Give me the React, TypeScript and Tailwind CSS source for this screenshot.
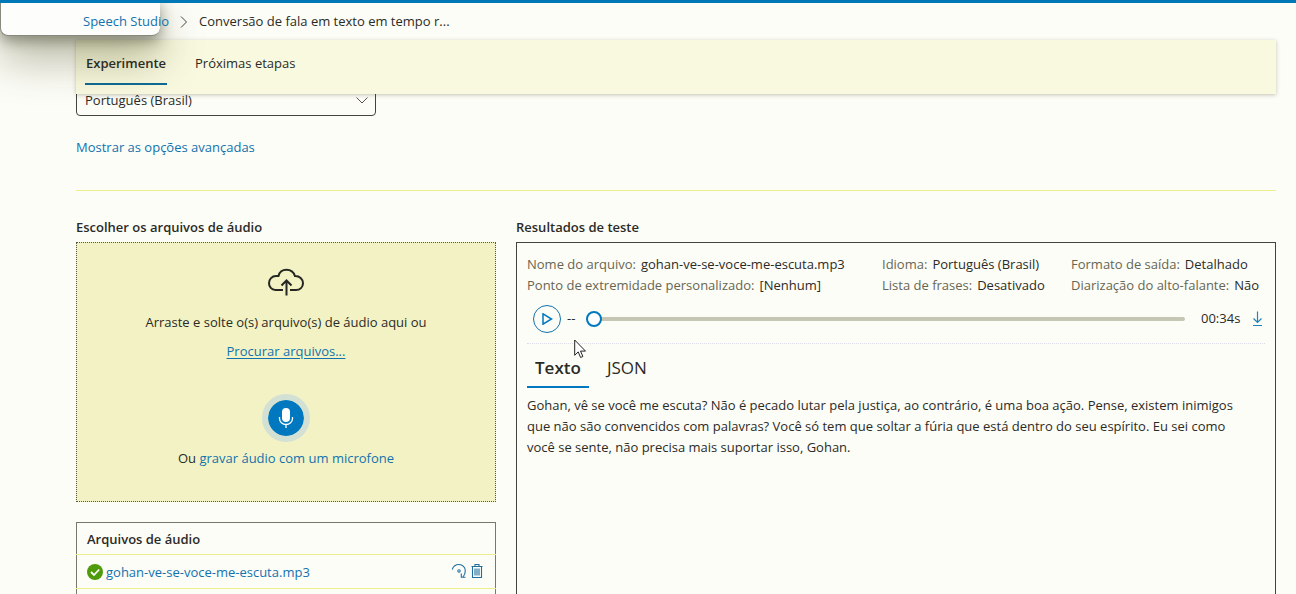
import React, { useState } from "react";

const linkClass = "text-[#1272ad]";

function Info({ label, value }: { label: string; value: string }) {
  return (
    <div className="flex gap-[5px] whitespace-nowrap">
      <dt className="text-[#666652]">{label}</dt>
      <dd>{value}</dd>
    </div>
  );
}

function ChevronDown() {
  return (
    <svg className="pointer-events-none mr-2 h-3 w-3 self-center justify-self-end [grid-area:1/1]" viewBox="0 0 12 12" fill="none" stroke="#555548" strokeWidth="1" aria-hidden="true">
      <path d="M.5 3.500 6 9l5.500-5.500" />
    </svg>
  );
}

function CloudUpload() {
  return (
    <svg className="h-[28px] w-[38px]" viewBox="0 0 38 28" fill="none" stroke="#262622" strokeWidth="2" aria-hidden="true">
      <path d="M16 22H8.500C4.500 22 2 18.800 2 15.200 2 11.200 5 8 9 8h2.500C12.500 4 15.500 1.800 19.500 1.800c4.200 0 7.200 2.400 8.400 6.200 4.600-.2 8.100 2.900 8.100 7.200 0 4-3 6.800-7 6.800h-6" />
      <path d="M19.500 27.500V13M14.500 17.500l5-5 5 5" />
    </svg>
  );
}

function Mic() {
  return (
    <svg className="h-[22px] w-[16px]" viewBox="0 0 16 22" fill="none" aria-hidden="true">
      <rect x="4" y="1" width="8" height="14" rx="4" fill="#fff" />
      <path d="M1.500 10v1.500a6.500 6 0 0 0 13 0V10M8 17.500V21" stroke="#fff" strokeWidth="1.300" />
    </svg>
  );
}

function Check() {
  return (
    <svg className="h-4 w-4 shrink-0" viewBox="0 0 16 16" role="img" aria-label="Concluído">
      <circle cx="8" cy="8" r="8" fill="#4f9b0c" />
      <path d="m4 8 3 3 5.200-5.500" fill="none" stroke="#fff" strokeWidth="1.800" />
    </svg>
  );
}

function Redo() {
  return (
    <svg className="h-4 w-4" viewBox="0 0 16 16" fill="none" stroke="#1f6e9e" strokeWidth="1.100" aria-hidden="true">
      <path d="M1.200 6.500C2.200 3.500 4.600 1.500 8 1.500c3.700 0 6.300 2.700 6.300 6.200 0 2.500-.8 4.500-2.300 6.300" />
      <path d="M10.300 10.500v3.700h4.200" />
      <circle cx="8" cy="8" r="1.200" />
    </svg>
  );
}

function Trash() {
  return (
    <svg className="h-4 w-3" viewBox="0 0 12 16" fill="none" stroke="#1f6e9e" strokeWidth="1.100" aria-hidden="true">
      <path d="M.5 3.500h11M4 3.500v-2h4v2M1.500 3.500v11h9v-11M4 5.500v7M6 5.500v7M8 5.500v7" />
    </svg>
  );
}

function Pointer() {
  return (
    <svg className="pointer-events-none absolute left-[574px] top-[339px] z-40 h-[20px] w-[13px]" viewBox="0 0 13 20" aria-hidden="true">
      <path d="M.7 1v15.300l3.500-3.400 2.400 5.600 2.300-1-2.400-5.400h5Z" fill="#fff" stroke="#222" strokeWidth="1" />
    </svg>
  );
}

export default function App() {
  const [position, setPosition] = useState(0);

  return (
    <div className="relative flex h-screen flex-col overflow-hidden bg-[#fdfdf8] font-['Open_Sans','Noto_Sans',sans-serif] text-[13px] leading-[21px] text-[#2b2b26]">
      <div className="pointer-events-none absolute left-0 top-0 z-10 h-9 w-40 rounded-b-lg border-b border-l border-[#88887c] bg-[#fdfdfc] shadow-[0_5px_14px_rgba(40,40,20,0.45),0_22px_44px_rgba(60,60,10,0.4)]" />
      <div className="relative z-20 h-[3px] shrink-0 bg-[#0078b8]" />

      <nav aria-label="Trilha" className="relative z-20 flex h-[37px] shrink-0 items-center gap-[11px] pl-[83px]">
        <a href="#studio" className={linkClass}>Speech Studio</a>
        <svg className="h-3 w-2" viewBox="0 0 8 12" fill="none" stroke="#44443e" aria-hidden="true">
          <path d="m1 .5 5.500 5.500L1 11.500" />
        </svg>
        <span>Conversão de fala em texto em tempo r...</span>
      </nav>

      <div role="tablist" aria-label="Seções" className="relative z-[5] ml-[76px] mr-5 flex h-[54px] shrink-0 items-start gap-5 bg-[#f9f9e0] pl-[9px] shadow-[0_1px_4px_rgba(60,60,20,0.3)]">
        <button role="tab" aria-selected="true" className="h-[45px] border-b-2 border-[#0f6a94] px-px pt-1 font-semibold">Experimente</button>
        <button role="tab" aria-selected="false" className="h-[45px] border-b-2 border-transparent px-2 pt-1">Próximas etapas</button>
      </div>

      <main className="flex min-h-0 flex-1 flex-col pl-[76px] pr-5">
        <div className="flex h-[22px] w-[300px] shrink-0 items-end overflow-hidden">
          <div className="grid w-full">
            <select aria-label="Idioma" className="h-8 w-full appearance-none rounded-sm border border-[#44443e] bg-transparent px-2 [grid-area:1/1]">
              <option>Português (Brasil)</option>
            </select>
            <ChevronDown />
          </div>
        </div>
        <a href="#avancadas" className={`mt-[21px] self-start ${linkClass}`}>Mostrar as opções avançadas</a>
        <hr className="mt-8 border-[#eeee8c]" />

        <div className="mt-[26px] flex min-h-0 flex-1 gap-5">
          <section className="flex w-[420px] shrink-0 flex-col">
            <h2 className="shrink-0 font-semibold">Escolher os arquivos de áudio</h2>
            <div className="mt-1 flex h-[260px] shrink-0 flex-col items-center border border-dotted border-[#55554a] bg-[#f2f2c4] pt-[25px]">
              <CloudUpload />
              <p className="mt-4">Arraste e solte o(s) arquivo(s) de áudio aqui ou</p>
              <button className={`mt-2 underline underline-offset-2 ${linkClass}`}>Procurar arquivos...</button>
              <button aria-label="Gravar" className="mt-8 flex h-12 w-12 items-center justify-center rounded-full border-6 border-[#d3e0d4] bg-[#0078bf] bg-clip-padding">
                <Mic />
              </button>
              <p className="mt-[6px]">Ou <a href="#microfone" className={linkClass}>gravar áudio com um microfone</a></p>
            </div>
            <table className="mt-5 w-full shrink-0 border border-[#77776a]">
              <thead>
                <tr className="h-8 border-b border-[#eeee8c]">
                  <th scope="col" colSpan={2} className="px-[10px] pt-[2px] text-left font-semibold">Arquivos de áudio</th>
                </tr>
              </thead>
              <tbody>
                <tr className="h-[34px] border-b border-[#eeee8c]">
                  <td className="pl-[10px]">
                    <span className="flex items-center gap-[3px]">
                      <Check />
                      <a href="#arquivo" className={`pt-[2px] ${linkClass}`}>gohan-ve-se-voce-me-escuta.mp3</a>
                    </span>
                  </td>
                  <td className="pb-[2px] pr-3">
                    <span className="flex justify-end gap-1">
                      <button aria-label="Repetir"><Redo /></button>
                      <button aria-label="Excluir"><Trash /></button>
                    </span>
                  </td>
                </tr>
                <tr className="h-[34px]"><td colSpan={2} /></tr>
              </tbody>
            </table>
          </section>

          <section className="flex min-w-0 flex-1 flex-col">
            <h2 className="font-semibold">Resultados de teste</h2>
            <div className="mt-1 flex-1 border border-b-0 border-[#44443e] px-[10px] pt-[11px]">
              <dl className="grid grid-cols-[355fr_189fr_194fr]">
                <div>
                  <Info label="Nome do arquivo:" value="gohan-ve-se-voce-me-escuta.mp3" />
                  <Info label="Ponto de extremidade personalizado:" value="[Nenhum]" />
                </div>
                <div>
                  <Info label="Idioma:" value="Português (Brasil)" />
                  <Info label="Lista de frases:" value="Desativado" />
                </div>
                <div>
                  <Info label="Formato de saída:" value="Detalhado" />
                  <Info label="Diarização do alto-falante:" value="Não" />
                </div>
              </dl>

              <div className="flex h-12 items-center border-b border-dotted border-[#dcdce8] pb-[2px] pl-[6px]">
                <button aria-label="Reproduzir" className="flex h-7 w-7 shrink-0 items-center justify-center rounded-full border border-[#1272ad]">
                  <svg className="h-3 w-3" viewBox="0 0 12 12" fill="none" stroke="#0078bf" strokeWidth="1.500" aria-hidden="true">
                    <path d="M2 .8v10.400L10.500 6Z" />
                  </svg>
                </button>
                <span className="w-[25px] pl-[6px]">--</span>
                <input
                  type="range"
                  aria-label="Posição do áudio"
                  min={0}
                  max={34}
                  value={position}
                  onChange={(e) => setPosition(Number(e.target.value))}
                  className="h-4 min-w-0 flex-1 appearance-none bg-transparent [&::-webkit-slider-runnable-track]:h-1 [&::-webkit-slider-runnable-track]:rounded-full [&::-webkit-slider-runnable-track]:bg-[#c6c6b4] [&::-webkit-slider-thumb]:-mt-[6px] [&::-webkit-slider-thumb]:h-4 [&::-webkit-slider-thumb]:w-4 [&::-webkit-slider-thumb]:appearance-none [&::-webkit-slider-thumb]:rounded-full [&::-webkit-slider-thumb]:border-2 [&::-webkit-slider-thumb]:border-solid [&::-webkit-slider-thumb]:border-[#0078bf] [&::-webkit-slider-thumb]:bg-white"
                />
                <span className="w-[67px] pl-4">00:34s</span>
                <button aria-label="Baixar" className="pr-[2px]">
                  <svg className="h-4 w-[11px]" viewBox="0 0 11 16" fill="none" stroke="#1f85b8" strokeWidth="1.200" aria-hidden="true">
                    <path d="M5.500 .5v11M1.500 7.500l4 4 4-4M1 14.500h9" />
                  </svg>
                </button>
              </div>

              <div role="tablist" aria-label="Formato" className="flex text-[17px]">
                <button role="tab" aria-selected="true" className="h-11 border-b-2 border-[#0078bf] px-2 pt-1 font-semibold">Texto</button>
                <button role="tab" aria-selected="false" className="ml-[10px] h-11 border-b-2 border-transparent px-2 pt-1">JSON</button>
              </div>
              <p className="mt-[7px] pr-3">
                Gohan, vê se você me escuta? Não é pecado lutar pela justiça, ao contrário, é uma boa ação. Pense, existem inimigos que não são convencidos com palavras? Você só tem que soltar a fúria que está dentro do seu espírito. Eu sei como você se sente, não precisa mais suportar isso, Gohan.
              </p>
            </div>
          </section>
        </div>
      </main>
      <Pointer />
    </div>
  );
}
